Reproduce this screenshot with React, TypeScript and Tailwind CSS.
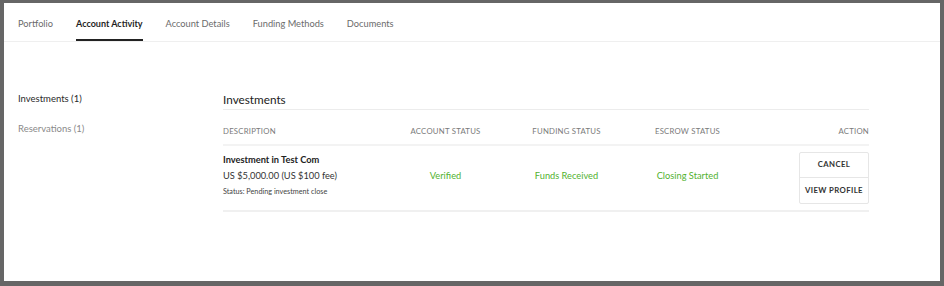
const tabs = ['Portfolio', 'Account Activity', 'Account Details', 'Funding Methods', 'Documents'];

export default function App() {
  return (
    <div
      className="h-[286px] w-[944px] bg-[#666666] pt-[3px] pl-[4px] pr-[4px] pb-[5px]"
      style={{ fontFamily: 'Lato, "Open Sans", sans-serif' }}
    >
      <div className="h-full bg-white">
        <nav className="flex h-[39px] items-end gap-[23px] border-b border-[#efefef] px-[14px]">
          {tabs.map((t) => {
            const active = t === 'Account Activity';
            return (
              <div
                key={t}
                className={
                  active
                    ? 'border-b-2 border-[#222] pb-[8px] text-[9px] leading-[14px] font-bold text-[#1f1f1f]'
                    : 'border-b-2 border-transparent pb-[8px] text-[9.25px] leading-[14px] text-[#6b6b6b]'
                }
              >
                {t}
              </div>
            );
          })}
        </nav>

        <div className="flex px-[14px] pt-[50px]">
          <aside className="w-[205px] shrink-0 text-[9.5px] leading-[14px]">
            <div className="text-[#2a2a2a]">Investments (1)</div>
            <div className="mt-[16px] text-[#8a8a8a]">Reservations (1)</div>
          </aside>

          <section className="w-[646px]">
            <h2 className="border-b border-[#ececec] pb-[1px] text-[11.75px] leading-[16px] text-[#222]">
              Investments
            </h2>
            <div className="grid grid-cols-[162px_121px_121px_121px_121px] items-center border-b-2 border-[#f3f3f3] pt-[15px] pb-[7px] text-[7.75px] leading-[12px] uppercase tracking-[0.03em] text-[#7a7a7a]">
              <div>Description</div>
              <div className="text-center">Account Status</div>
              <div className="text-center">Funding Status</div>
              <div className="text-center">Escrow Status</div>
              <div className="text-right">Action</div>
            </div>
            <div className="grid grid-cols-[162px_121px_121px_121px_121px] items-start border-b-2 border-[#f0f0f0] pt-[6px] pb-[6px]">
              <div>
                <div className="text-[9.25px] leading-[16px] font-bold text-[#222]">Investment in Test Com</div>
                <div className="text-[9.25px] leading-[16px] text-[#333]">US $5,000.00 (US $100 fee)</div>
                <div className="text-[7.25px] leading-[16px] text-[#444]">Status: Pending investment close</div>
              </div>
              <div className="self-center pb-[4px] text-center text-[9.25px] leading-[14px] text-[#52b22f]">Verified</div>
              <div className="self-center pb-[4px] text-center text-[9.25px] leading-[14px] text-[#52b22f]">Funds Received</div>
              <div className="self-center pb-[4px] text-center text-[9.25px] leading-[14px] text-[#52b22f]">Closing Started</div>
              <div className="flex justify-end">
                <div className="flex w-[70px] flex-col rounded-[2px] border border-[#e6e6e6] text-[7.75px] font-bold tracking-[0.05em] text-[#333]">
                  <button className="h-[25px] border-b border-[#e6e6e6] uppercase">Cancel</button>
                  <button className="h-[25px] uppercase">View Profile</button>
                </div>
              </div>
            </div>
          </section>
        </div>
      </div>
    </div>
  );
}
